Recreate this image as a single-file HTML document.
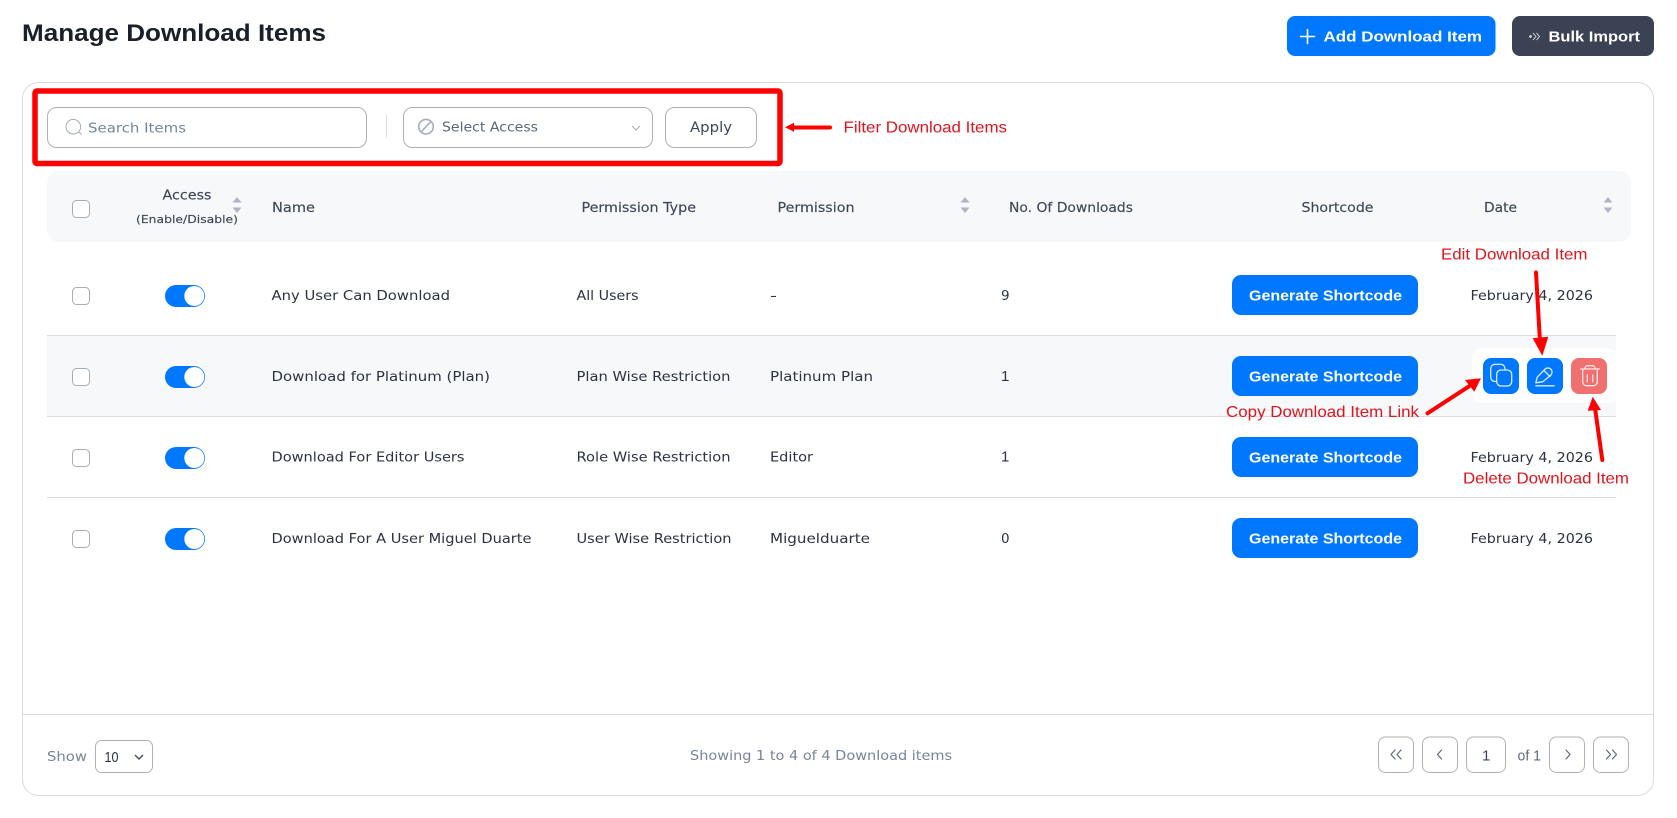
<!DOCTYPE html>
<html lang="en"><head><meta charset="utf-8"><title>Manage Download Items</title>
<style>
html,body{margin:0;padding:0;background:#fff;width:1677px;height:818px;overflow:hidden}
svg{display:block}
text{font-family:"DejaVu Sans",sans-serif;font-size:13.5px;fill:#2b3240}
.l{font-family:"Liberation Sans",sans-serif;font-size:15px}
.b{font-family:"Liberation Sans",sans-serif;font-weight:700;font-size:15px;fill:#fff}
.h{fill:#3f4757;font-size:13px;stroke:#3f4757;stroke-width:.15px}
.m{fill:#76849b;font-size:13.5px}
.r{font-family:"Liberation Sans",sans-serif;font-size:16px;fill:#e0141c}
.box{fill:#fff;stroke:#aeb1b6;stroke-width:1}
.ck{fill:#fff;stroke:#a9acb1;stroke-width:1}
.line{stroke:#d9dbdf;stroke-width:1}
.s{fill:#b0b5c6}
.ic{fill:none;stroke:#dcebff;stroke-width:1.3;stroke-linecap:round;stroke-linejoin:round}
.it{fill:none;stroke:#fde6e6;stroke-width:1.3;stroke-linecap:round;stroke-linejoin:round}
.pg{fill:none;stroke:#5f6878;stroke-width:1.2;stroke-linecap:round;stroke-linejoin:round}
.ar{stroke:#fe0000;stroke-width:4;stroke-linecap:round;fill:none}
</style></head><body>
<svg width="1677" height="818" viewBox="0 0 1677 818" xmlns="http://www.w3.org/2000/svg">
<rect width="1677" height="818" fill="#fff"/>
<text x="22" y="41" textLength="304" lengthAdjust="spacingAndGlyphs" style="font-family:'Liberation Sans',sans-serif;font-weight:700;font-size:24px;fill:#1b1f2a">Manage Download Items</text>

<rect x="1287" y="16" width="208.500" height="40" rx="8" fill="#0077ff"/>
<path d="M1307.500 29.500v14M1300.500 36.500h14" stroke="#fff" stroke-width="1.600" stroke-linecap="round"/>
<text class="b" x="1323.500" y="41.500" textLength="158.500" lengthAdjust="spacingAndGlyphs">Add Download Item</text>
<rect x="1512" y="16" width="142" height="40" rx="8" fill="#3b4254"/>
<path d="M1533 33l3 3.500-3 3.500M1536.500 33l3 3.500-3 3.500" fill="none" stroke="#c3c7cf" stroke-width="1"/><circle cx="1530.500" cy="36.500" r="1.400" fill="#d5d8de"/>
<text class="b" x="1548.500" y="41.500" textLength="91.500" lengthAdjust="spacingAndGlyphs">Bulk Import</text>

<rect x="22.500" y="82.500" width="1631" height="713" rx="16" fill="#fff" stroke="#d8dadd"/>
<path class="line" d="M23 714.500H1653"/>

<!-- filters -->
<rect class="box" x="47.500" y="107.500" width="319" height="40" rx="9"/>
<circle cx="73.300" cy="126.700" r="7.300" fill="none" stroke="#a3abb8" stroke-width="1"/><path d="M78.700 132l3 2.500" stroke="#a3abb8" stroke-width="1"/>
<text class="m" x="88" y="132.500" textLength="98" lengthAdjust="spacingAndGlyphs">Search Items</text>
<path d="M386.500 115v23" stroke="#dcdee2"/>
<rect class="box" x="403.500" y="107.500" width="249" height="40" rx="9"/>
<circle cx="426" cy="126.700" r="7.300" fill="none" stroke="#a6abbd" stroke-width="1.600"/><path d="M421.500 131.500l9-9.500" stroke="#a6abbd" stroke-width="1.600"/>
<text x="442" y="131.500" textLength="96" lengthAdjust="spacingAndGlyphs" style="fill:#5d6678;font-size:13px">Select Access</text>
<path d="M632 126l4 4 4-4" fill="none" stroke="#a3abb8" stroke-width="1"/>
<rect class="box" x="665.500" y="107.500" width="91" height="40" rx="9"/>
<text x="690" y="132" textLength="42" lengthAdjust="spacingAndGlyphs" style="fill:#3d4556;font-size:14.500px">Apply</text>

<!-- header -->
<rect x="47" y="171" width="1584" height="71" rx="12" fill="#f6f8fa"/>
<rect class="ck" x="72.500" y="200.500" width="17" height="17" rx="4"/>
<text class="h" x="162.500" y="199.500" textLength="49" lengthAdjust="spacingAndGlyphs">Access</text>
<text class="h" x="136" y="223" textLength="102" lengthAdjust="spacingAndGlyphs" style="font-size:11px">(Enable/Disable)</text>
<path class="s" d="M237 197l4.500 5.500h-9zM237 213l4.500-5.500h-9z"/>
<text class="h" x="272" y="212" textLength="43" lengthAdjust="spacingAndGlyphs">Name</text>
<text class="h" x="581.500" y="212" textLength="114.500" lengthAdjust="spacingAndGlyphs">Permission Type</text>
<text class="h" x="777.500" y="212" textLength="77" lengthAdjust="spacingAndGlyphs">Permission</text>
<path class="s" d="M965 197l4.500 5.500h-9zM965 213l4.500-5.500h-9z"/>
<text class="h" x="1009" y="212" textLength="124" lengthAdjust="spacingAndGlyphs">No. Of Downloads</text>
<text class="h" x="1301.500" y="212" textLength="72" lengthAdjust="spacingAndGlyphs">Shortcode</text>
<text class="h" x="1484" y="212" textLength="33" lengthAdjust="spacingAndGlyphs">Date</text>
<path class="s" d="M1608 197l4.500 5.500h-9zM1608 213l4.500-5.500h-9z"/>

<!-- rows -->
<rect x="47" y="335" width="1569" height="82" fill="#f6f8fa"/>
<path class="line" d="M47 335.500H1616M47 416.500H1616M47 497.500H1616"/>

<!-- row 1 -->
<rect class="ck" x="72.500" y="287.500" width="17" height="17" rx="4"/>
<rect x="165" y="285" width="40" height="22" rx="11" fill="#0077ff"/><circle cx="194.300" cy="296" r="10" fill="#fff"/>
<text x="271.500" y="300" textLength="178.500" lengthAdjust="spacingAndGlyphs">Any User Can Download</text>
<text x="576.500" y="300" textLength="62" lengthAdjust="spacingAndGlyphs">All Users</text>
<text x="770" y="300" textLength="7" lengthAdjust="spacingAndGlyphs">-</text>
<text x="1001" y="300">9</text>
<rect x="1232" y="275" width="186" height="40" rx="9" fill="#0077ff"/>
<text class="b" x="1249" y="300.500" textLength="153" lengthAdjust="spacingAndGlyphs">Generate Shortcode</text>
<text x="1470.500" y="300" textLength="122.500" lengthAdjust="spacingAndGlyphs">February 4, 2026</text>

<!-- row 2 -->
<rect class="ck" x="72.500" y="368.500" width="17" height="17" rx="4"/>
<rect x="165" y="366" width="40" height="22" rx="11" fill="#0077ff"/><circle cx="194.300" cy="377" r="10" fill="#fff"/>
<text x="271.500" y="381" textLength="218.500" lengthAdjust="spacingAndGlyphs">Download for Platinum (Plan)</text>
<text x="576.500" y="381" textLength="154" lengthAdjust="spacingAndGlyphs">Plan Wise Restriction</text>
<text x="770" y="381" textLength="103" lengthAdjust="spacingAndGlyphs">Platinum Plan</text>
<text class="l" x="1001" y="381">1</text>
<rect x="1232" y="356" width="186" height="40" rx="9" fill="#0077ff"/>
<text class="b" x="1249" y="381.500" textLength="153" lengthAdjust="spacingAndGlyphs">Generate Shortcode</text>
<rect x="1472" y="348" width="146" height="55" rx="10" fill="#fff"/>
<rect x="1483" y="358" width="36" height="36" rx="8" fill="#0077ff"/>
<rect x="1527" y="358" width="36" height="36" rx="8" fill="#0077ff"/>
<rect x="1571" y="358" width="36" height="36" rx="8" fill="#f07070"/>
<path class="ic" d="M1496 381.500h-1a4.300 4.300 0 0 1-4.300-4.300v-8.600a4.300 4.300 0 0 1 4.300-4.300h5.700a4.300 4.300 0 0 1 4.300 4.300v1"/>
<rect class="ic" x="1496.700" y="370" width="15" height="16" rx="4.300"/>
<path class="ic" d="M1535.800 382.800l1.400-5.600 8-8.300a4.200 4.200 0 0 1 6 5.800l-8.300 7zM1544 370.500l6 6M1535.800 385.800h18.500"/>
<path class="it" d="M1580.700 369h18.600M1585 369v-.8a2.500 2.500 0 0 1 2.500-2.500h5a2.500 2.500 0 0 1 2.500 2.500v.8M1582.700 369v12.700a4 4 0 0 0 4 4h6.600a4 4 0 0 0 4-4V369M1587.300 375v6.700M1592.700 375v6.700"/>

<!-- row 3 -->
<rect class="ck" x="72.500" y="449.500" width="17" height="17" rx="4"/>
<rect x="165" y="447" width="40" height="22" rx="11" fill="#0077ff"/><circle cx="194.300" cy="458" r="10" fill="#fff"/>
<text x="271.500" y="461.500" textLength="193" lengthAdjust="spacingAndGlyphs">Download For Editor Users</text>
<text x="576.500" y="461.500" textLength="154" lengthAdjust="spacingAndGlyphs">Role Wise Restriction</text>
<text x="770" y="461.500" textLength="43" lengthAdjust="spacingAndGlyphs">Editor</text>
<text class="l" x="1001" y="461.500">1</text>
<rect x="1232" y="437" width="186" height="40" rx="9" fill="#0077ff"/>
<text class="b" x="1249" y="462.500" textLength="153" lengthAdjust="spacingAndGlyphs">Generate Shortcode</text>
<text x="1470.500" y="462" textLength="122.500" lengthAdjust="spacingAndGlyphs">February 4, 2026</text>

<!-- row 4 -->
<rect class="ck" x="72.500" y="530.500" width="17" height="17" rx="4"/>
<rect x="165" y="528" width="40" height="22" rx="11" fill="#0077ff"/><circle cx="194.300" cy="539" r="10" fill="#fff"/>
<text x="271.500" y="543" textLength="260" lengthAdjust="spacingAndGlyphs">Download For A User Miguel Duarte</text>
<text x="576.500" y="543" textLength="155" lengthAdjust="spacingAndGlyphs">User Wise Restriction</text>
<text x="770" y="543" textLength="100" lengthAdjust="spacingAndGlyphs">Miguelduarte</text>
<text x="1001" y="543">0</text>
<rect x="1232" y="518" width="186" height="40" rx="9" fill="#0077ff"/>
<text class="b" x="1249" y="543.500" textLength="153" lengthAdjust="spacingAndGlyphs">Generate Shortcode</text>
<text x="1470.500" y="543" textLength="122.500" lengthAdjust="spacingAndGlyphs">February 4, 2026</text>

<!-- footer -->
<text class="m" x="47" y="761" textLength="40" lengthAdjust="spacingAndGlyphs">Show</text>
<rect class="box" x="95.500" y="740.500" width="57" height="32" rx="6"/>
<text class="l" x="104.500" y="762" textLength="14" lengthAdjust="spacingAndGlyphs">10</text>
<path d="M135 755l4 4 4-4" fill="none" stroke="#4a5261" stroke-width="1.500"/>
<text class="m" x="690" y="760" textLength="262" lengthAdjust="spacingAndGlyphs">Showing 1 to 4 of 4 Download items</text>
<rect class="box" x="1378.500" y="737" width="35" height="35.500" rx="7"/>
<rect class="box" x="1422.500" y="737" width="35" height="35.500" rx="7"/>
<rect class="box" x="1466.500" y="737" width="39" height="35.500" rx="7"/>
<rect class="box" x="1549.500" y="737" width="35" height="35.500" rx="7"/>
<rect class="box" x="1593.500" y="737" width="35" height="35.500" rx="7"/>
<path class="pg" d="M1395 750l-4 4.500 4 4.500M1401 750l-4 4.500 4 4.500M1441.500 750l-4 4.500 4 4.500M1566 750l4 4.500-4 4.500M1606.500 750l4 4.500-4 4.500M1612.500 750l4 4.500-4 4.500"/>
<text class="l" x="1482" y="760.500" style="fill:#3d4556">1</text>
<text class="l" x="1517.500" y="760.500" textLength="23.500" lengthAdjust="spacingAndGlyphs" style="fill:#5f6878">of 1</text>

<!-- annotations -->
<rect x="35" y="91" width="745" height="72.500" rx="2" fill="none" stroke="#fe0000" stroke-width="5.500"/>
<path class="ar" d="M830 127.500H792" stroke-width="3.500"/><path d="M785 127.300l9-4.500v9z" fill="#fe0000"/>
<text class="r" x="843.500" y="132.500" textLength="163.500" lengthAdjust="spacingAndGlyphs">Filter Download Items</text>
<text class="r" x="1441" y="259.500" textLength="146.500" lengthAdjust="spacingAndGlyphs">Edit Download Item</text>
<path class="ar" d="M1536 272.500L1540 342"/><path d="M1532.700 338.300l15.600-1.600-6 19z" fill="#fe0000"/>
<text class="r" x="1226" y="417" textLength="193" lengthAdjust="spacingAndGlyphs">Copy Download Item Link</text>
<path class="ar" d="M1427.500 413.300L1470 385.700"/><path d="M1481 378.300L1465 380l9.300 11.700z" fill="#fe0000"/>
<text class="r" x="1463" y="483.500" textLength="166" lengthAdjust="spacingAndGlyphs">Delete Download Item</text>
<path class="ar" d="M1602.300 460L1595 408"/><path d="M1592.700 396.700l-5 14 13.300-.7z" fill="#fe0000"/>
</svg>
</body></html>
